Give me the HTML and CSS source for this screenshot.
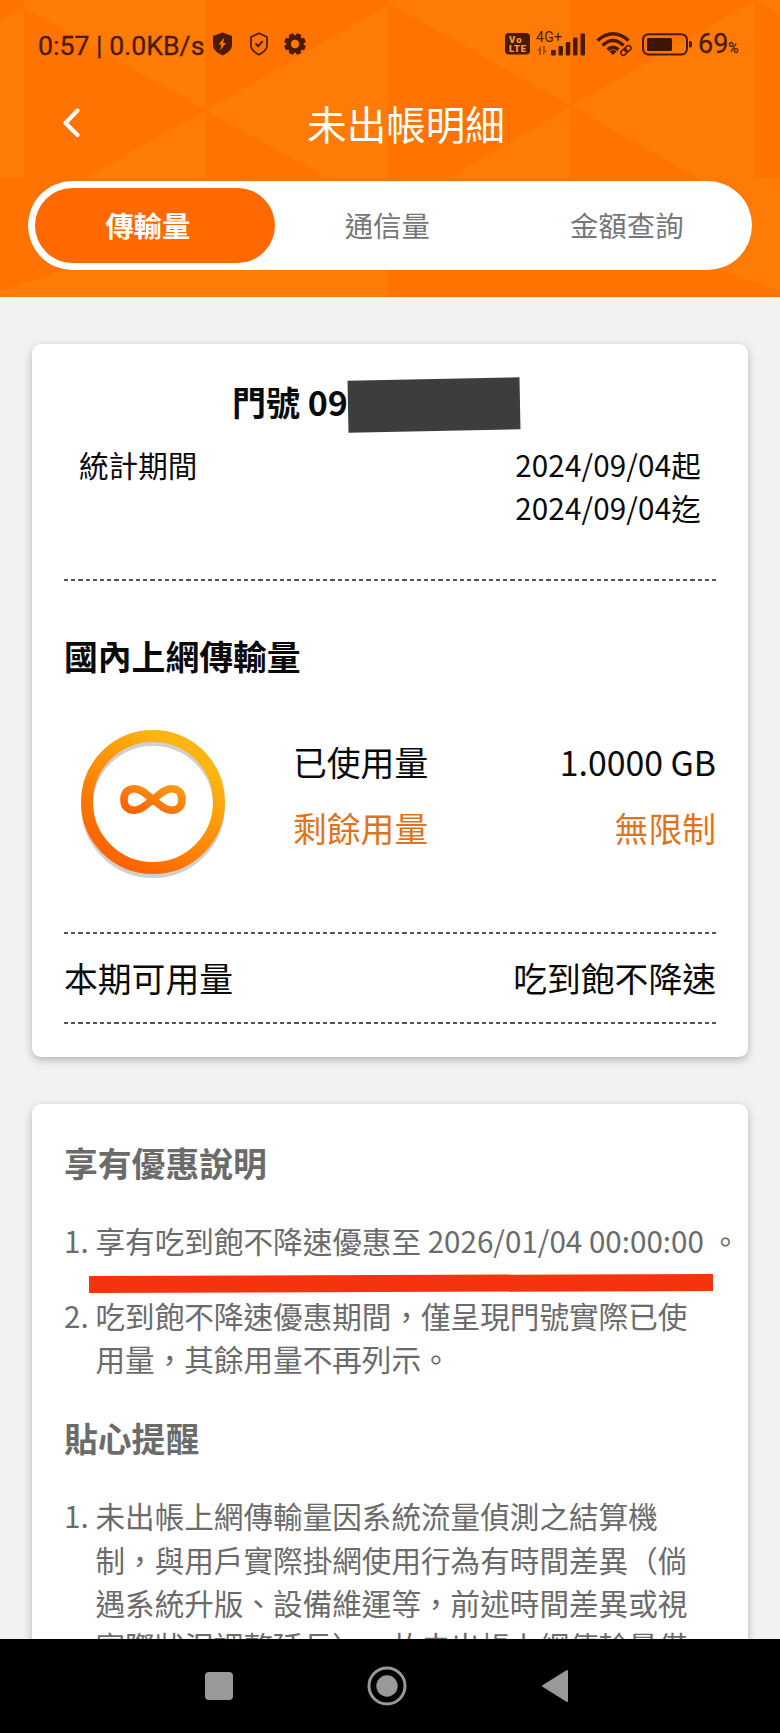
FILE: index.html
```html
<!DOCTYPE html>
<html lang="zh-Hant">
<head>
<meta charset="utf-8">
<title>未出帳明細</title>
<link rel="stylesheet" href="styles.css">
</head>
<body>
<div class="screen">
  <header class="header">
    <svg class="header-bg" viewBox="0 0 780 297" preserveAspectRatio="none" aria-hidden="true">
      <rect width="780" height="297" fill="#ff7303"/>
      <g fill="#ff7b07">
        <path d="M0 20L24 8V178H0z"/>
        <path d="M24 0H205V110L24 8z"/>
        <path d="M205 110V178H84z"/>
        <path d="M205 110L388 5V178H326z"/>
        <path d="M388 0H571V106L388 3z"/>
        <path d="M571 106V178H448z"/>
        <path d="M571 106L755 0V178H697z"/>
        <path d="M755 0H780V14z"/>
        <path d="M0 291L205 225H388V297H0z"/>
        <path d="M780 178V291L700 264V178z"/>
      </g>
    </svg>
    <div class="status">
      <span class="clock">0:57 | 0.0KB/s</span>
      <svg class="i-shield" width="21" height="24" viewBox="0 0 21 24"><path d="M10.500 .5L20 4v9c0 5-4.500 8-9.500 10.500C5.500 21 1 18 1 13V4z" fill="#4a1b00"/><path d="M12.500 5.500L6.500 12.500h3L8 18.500l6-7.500h-3z" fill="#ff7a05"/></svg>
      <svg class="i-check" width="20" height="24" viewBox="0 0 20 24" fill="none" stroke="#4a1b00" stroke-width="1.700"><path d="M10 1.200L18 5v9c0 4-4 6.500-8 8.700C6 20.500 2 18 2 14V5z"/><path d="M6.500 11.500l2.700 2.700 4.500-5" stroke-width="2"/></svg>
      <svg class="i-gear" width="22" height="22" viewBox="-11 -11 22 22"><g fill="#4a1b00"><circle r="8.800"/><rect x="-2.600" y="-10.800" width="5.200" height="21.600" rx="1.200" transform="rotate(22.500)"/><rect x="-2.600" y="-10.800" width="5.200" height="21.600" rx="1.200" transform="rotate(67.500)"/><rect x="-2.600" y="-10.800" width="5.200" height="21.600" rx="1.200" transform="rotate(112.500)"/><rect x="-2.600" y="-10.800" width="5.200" height="21.600" rx="1.200" transform="rotate(157.500)"/></g><circle r="4.200" fill="#ff7a05"/></svg>
      <svg class="i-volte" width="25" height="22" viewBox="0 0 25 22"><rect width="25" height="21.500" rx="4" fill="#4a1b00"/><g fill="#ff9a45" font-family="Roboto, sans-serif" font-weight="900" font-size="9.500"><text x="4" y="10" textLength="12.500">Vo</text><text x="4" y="18.800" textLength="17">LTE</text></g></svg>
      <svg class="i-signal" width="50" height="26" viewBox="0 0 50 26"><text x="0" y="11" font-family="Roboto, sans-serif" font-size="14" textLength="26" fill="#4a1b00">4G+</text><g fill="#a84a05"><path d="M1 19.500l4-4.500v9H3v-4.500zM7 15v9l4-4.500H9V15z"/></g><g fill="#4a1b00"><rect x="15" y="19" width="4.800" height="5.500" rx="1"/><rect x="22.500" y="15" width="4.500" height="9.500" rx="1"/><rect x="29.800" y="11" width="4.500" height="13.500" rx="1"/><rect x="37" y="6.500" width="4.500" height="18" rx="1"/><rect x="44.500" y="2.500" width="4.500" height="22" rx="1"/></g></svg>
      <svg class="i-wifi" width="37" height="26" viewBox="0 0 37 26" fill="none" stroke="#4a1b00"><g stroke-width="3.500"><path d="M1.500 9.500Q17 -4 32.500 9.500"/><path d="M6.500 14.500Q17 4.500 27.500 14.500"/><path d="M11.500 18.700Q17 14 22.500 18.700"/></g><path d="M17 24l-3.600-3.600q3.600-2.600 7.200 0z" fill="#4a1b00" stroke="none"/><g stroke-width="1.500" transform="rotate(-42 30 19.500)"><rect x="24" y="16.900" width="7" height="5" rx="2.500"/><rect x="29" y="16.900" width="7" height="5" rx="2.500"/></g></svg>
      <svg class="i-battery" width="51" height="23" viewBox="0 0 51 23"><rect x="1" y="1.200" width="44" height="20.300" rx="5.500" fill="none" stroke="#4a1b00" stroke-width="2"/><rect x="5" y="5" width="25" height="13" rx="1.500" fill="#3d1500"/><path d="M47 8h1a2 2 0 0 1 2 2v2.500a2 2 0 0 1-2 2h-1z" fill="#4a1b00"/></svg>
      <span class="battery-text">69<small>%</small></span>
    </div>
    <div class="titlebar">
      <svg class="back" width="18" height="30" viewBox="0 0 18 30" fill="none" stroke="#fff" stroke-width="4" stroke-linecap="round" stroke-linejoin="round"><path d="M14.500 2.500L2.500 15l12 12"/></svg>
      <h1 class="title">未出帳明細</h1>
    </div>
    <nav class="tabs">
      <span class="tab tab-active">傳輸量</span>
      <span class="tab">通信量</span>
      <span class="tab">金額查詢</span>
    </nav>
  </header>

  <main class="content">
    <section class="card usage">
      <h2 class="phone"><span>門號 09</span><span class="mask"></span></h2>
      <div class="period"><span>統計期間</span><span class="dates">2024/09/04起<br>2024/09/04迄</span></div>
      <div class="dash"></div>
      <h2 class="section-title">國內上網傳輸量</h2>
      <div class="quota">
        <svg class="ring" width="148" height="152" viewBox="0 0 148 152">
          <defs>
            <linearGradient id="ring" x1=".25" y1=".9" x2=".75" y2=".15"><stop offset="0" stop-color="#ff6500"/><stop offset="1" stop-color="#fdb512"/></linearGradient>
            <linearGradient id="inf" x1="0" y1="1" x2="1" y2="0"><stop offset="0" stop-color="#fb5f05"/><stop offset="1" stop-color="#fb9a15"/></linearGradient>
          </defs>
          <circle cx="74" cy="78" r="66" fill="none" stroke="#d0d0d0" stroke-width="12"/>
          <circle cx="74" cy="74" r="66" fill="none" stroke="url(#ring)" stroke-width="12"/>
          <path d="M74 71.500C67 66 62 60.700 55.500 60.700C48 60.700 45 65 45 71.500S48 82.300 55.500 82.300C62 82.300 67 77 74 71.500C81 66 86 60.700 92.500 60.700C100 60.700 103 65 103 71.500S100 82.300 92.500 82.300C86 82.300 81 77 74 71.500z" fill="none" stroke="url(#inf)" stroke-width="7.600"/>
        </svg>
        <dl class="amounts">
          <div class="row"><dt>已使用量</dt><dd>1.0000 GB</dd></div>
          <div class="row remain"><dt>剩餘用量</dt><dd>無限制</dd></div>
        </dl>
      </div>
      <div class="dash"></div>
      <div class="row available"><span>本期可用量</span><span>吃到飽不降速</span></div>
      <div class="dash"></div>
    </section>

    <section class="card notes">
      <h2 class="note-title">享有優惠說明</h2>
      <ol class="list">
        <li class="marked"><span>1.</span><p>享有吃到飽不降速優惠至 2026/01/04 00:00:00 。</p></li>
        <li><span>2.</span><p>吃到飽不降速優惠期間，僅呈現門號實際已使<br>用量，其餘用量不再列示。</p></li>
      </ol>
      <h2 class="note-title second">貼心提醒</h2>
      <ol class="list">
        <li><span>1.</span><p>未出帳上網傳輸量因系統流量偵測之結算機<br>制，與用戶實際掛網使用行為有時間差異（倘<br>遇系統升版、設備維運等，前述時間差異或視<br>實際狀況調整延長），故未出帳上網傳輸量僅</p></li>
      </ol>
    </section>
  </main>

  <footer class="navbar">
    <svg width="30" height="30" viewBox="0 0 30 30"><rect x="1" y="1" width="28" height="28" rx="4" fill="#999"/></svg>
    <svg width="40" height="40" viewBox="0 0 40 40"><circle cx="20" cy="20" r="18" fill="none" stroke="#999" stroke-width="3"/><circle cx="20" cy="20" r="10.700" fill="#999"/></svg>
    <svg width="30" height="34" viewBox="0 0 30 34"><path d="M27 2v30L3 17z" fill="#999" stroke="#999" stroke-width="2" stroke-linejoin="round"/></svg>
  </footer>
</div>
</body>
</html>
```
FILE: styles.css
```css
* { box-sizing: border-box; }
body, h1, h2, p, dl, dd, ol { margin: 0; padding: 0; }
body { font-family: "Noto Sans CJK TC", sans-serif; background: #f2f2f2; color: #0a0a0a; text-spacing-trim: space-all; }
.screen { width: 780px; height: 1733px; display: flex; flex-direction: column; overflow: hidden; }

.header { position: relative; height: 297px; flex: none; padding: 0 28px; }
.header-bg { position: absolute; inset: 0; width: 100%; height: 100%; }
.header > :not(.header-bg) { position: relative; }

.status { height: 88px; display: flex; align-items: center; padding: 0 10px 0 10px; color: #4a1b00; font-family: Roboto, sans-serif; }
.status svg { flex: none; overflow: visible; }
.clock { width: 174px; font-size: 26.7px; line-height: 30px; padding-top: 3px; white-space: nowrap; -webkit-text-stroke: .3px #4a1b00; }
.i-check { margin-left: 16px; }
.i-gear { margin-left: 15px; }
.i-volte { margin-left: auto; }
.i-signal { margin-left: 6px; }
.i-wifi { margin-left: 10px; }
.i-battery { margin-left: 9px; }
.battery-text { width: 44px; margin-left: 5px; font-size: 27px; line-height: 30px; padding-top: 3px; white-space: nowrap; -webkit-text-stroke: .3px #4a1b00; }
.battery-text small { font-size: 14px; }

.titlebar { height: 93px; display: grid; grid-template-columns: 100px 1fr 100px; }
.back { margin: 20px 0 0 35px; }
.title { padding-left: 32px; text-align: center; color: #fff; font-size: 39.6px; font-weight: 400; line-height: 58px; padding-top: 6px; }

.tabs { height: 89px; padding: 7px 0 7px 7px; display: grid; grid-template-columns: repeat(3, 239.5px); background: #fff; border-radius: 45px; }
.tab { display: flex; align-items: center; justify-content: center; padding: 0 14px 2px 0; font-size: 28.4px; color: #777; border-radius: 38px; }
.tab-active { background: #ff6900; color: #fff; font-weight: 700; }

.content { flex: 1; min-height: 0; overflow: hidden; padding: 47px 32px 0; display: flex; flex-direction: column; gap: 47px; }
.card { flex: none; background: #fff; border-radius: 9px; padding: 0 32px; box-shadow: 0 3px 8px rgba(0, 0, 0, .26); }
.usage { height: 713px; }
.phone { display: flex; align-items: center; height: 56px; margin-top: 33px; padding-left: 168px; font-size: 34px; font-weight: 700; white-space: pre; }
.phone span:first-child { padding-bottom: 7px; }
.mask { width: 172px; height: 52px; background: #3d3d3d; transform: rotate(-1.1deg); }
.period { display: flex; justify-content: space-between; margin: 10px 15px 0; font-size: 29.6px; line-height: 43.3px; }
.dates { letter-spacing: .15px; }
.dash { height: 2px; background: repeating-linear-gradient(90deg, #555 0 4.2px, transparent 4.2px 7.2px); }
.period + .dash { margin-top: 49px; }
.section-title { margin-top: 50px; font-size: 33.8px; line-height: 50px; }
.quota { display: flex; align-items: flex-start; margin-top: 47px; height: 204px; }
.ring { flex: none; margin-left: 15px; }
.amounts { flex: 1; margin-left: 66px; padding-top: 9px; }
.row { display: flex; justify-content: space-between; font-size: 33.8px; line-height: 50px; }
.remain { margin-top: 16px; color: #df741c; }
.available { margin: 19px 0; }

.notes { height: 620px; color: #6b6b6b; }
.note-title { padding-top: 34px; font-size: 33.8px; line-height: 50px; }
.note-title.second { padding-top: 0; margin-top: 33px; }
.list { list-style: none; margin-top: 31px; font-size: 29.6px; line-height: 43.3px; }
.list li { display: flex; white-space: nowrap; }
.list span { flex: none; width: 31.5px; }
.marked { position: relative; padding-bottom: 31.5px; }
.marked::after { content: ""; position: absolute; left: 25px; bottom: 2px; width: 624px; height: 17px; background: #f5330f; transform: rotate(-.2deg); }

.navbar { flex: none; height: 94px; background: #000; display: flex; align-items: center; justify-content: center; gap: 133px; padding-right: 6px; }
```
